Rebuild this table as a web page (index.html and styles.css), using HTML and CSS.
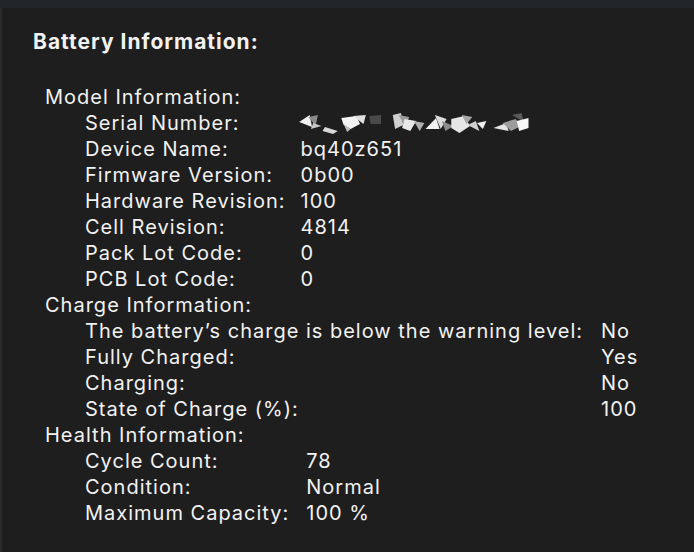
FILE: index.html
```html
<!DOCTYPE html>
<html>
<head>
<meta charset="utf-8">
<link rel="stylesheet" href="styles.css">
</head>
<body>
<div class="topbar"></div>
<main class="panel">
  <h1 class="title">Battery Information:</h1>
  <section class="group">
    <div class="group-head">Model Information:</div>
    <div class="grid model">
      <div class="k">Serial Number:</div>
      <div class="v">
        <svg class="scramble" width="234" height="22" viewBox="0 0 200 22" preserveAspectRatio="none">
          <polygon points="1,10 10,3 12,15" fill="#f0f0f0"/>
          <polygon points="9,5 17,3 15,14" fill="#8a8a8a"/>
          <polygon points="13,11 20,14 11,17" fill="#c8c8c8"/>
          <polygon points="23,15 34,19 30,22 21,19" fill="#d8d8d8"/>
          <polygon points="37,6 50,4 53,12 45,17 39,13" fill="#f4f4f4"/>
          <polygon points="47,4 58,3 56,12" fill="#e0e0e0"/>
          <polygon points="39,12 45,17 42,20" fill="#bdbdbd"/>
          <polygon points="61,4 71,3 71,12 62,12" fill="#4a4a4a"/>
          <polygon points="81,3 88,1 90,13 83,17" fill="#d0d0d0"/>
          <polygon points="86,3 95,5 92,15" fill="#9a9a9a"/>
          <polygon points="91,7 101,9 96,19 89,16" fill="#e8e8e8"/>
          <polygon points="99,9 108,11 104,19" fill="#b0b0b0"/>
          <polygon points="109,17 118,6 121,17" fill="#f2f2f2"/>
          <polygon points="117,3 127,7 122,17" fill="#dcdcdc"/>
          <polygon points="123,9 133,14 126,19" fill="#8c8c8c"/>
          <polygon points="131,7 142,4 147,14 138,21 131,16" fill="#e6e6e6"/>
          <polygon points="140,3 149,5 144,12" fill="#a8a8a8"/>
          <polygon points="145,13 152,9 155,19" fill="#cfcfcf"/>
          <polygon points="153,11 161,9 158,17" fill="#f0f0f0"/>
          <polygon points="167,16 178,11 180,19" fill="#e4e4e4"/>
          <polygon points="175,11 186,7 191,14 182,19" fill="#9c9c9c"/>
          <polygon points="183,3 191,1 193,10" fill="#5a5a5a"/>
          <polygon points="187,9 197,6 197,16 189,19" fill="#f6f6f6"/>
        </svg>
      </div>
      <div class="k">Device Name:</div><div class="v">bq40z651</div>
      <div class="k">Firmware Version:</div><div class="v">0b00</div>
      <div class="k">Hardware Revision:</div><div class="v">100</div>
      <div class="k">Cell Revision:</div><div class="v">4814</div>
      <div class="k">Pack Lot Code:</div><div class="v">0</div>
      <div class="k">PCB Lot Code:</div><div class="v">0</div>
    </div>
  </section>
  <section class="group">
    <div class="group-head">Charge Information:</div>
    <div class="grid charge">
      <div class="k">The battery’s charge is below the warning level:</div><div class="v">No</div>
      <div class="k">Fully Charged:</div><div class="v">Yes</div>
      <div class="k">Charging:</div><div class="v">No</div>
      <div class="k">State of Charge (%):</div><div class="v">100</div>
    </div>
  </section>
  <section class="group">
    <div class="group-head">Health Information:</div>
    <div class="grid health">
      <div class="k">Cycle Count:</div><div class="v">78</div>
      <div class="k">Condition:</div><div class="v">Normal</div>
      <div class="k">Maximum Capacity:</div><div class="v">100 %</div>
    </div>
  </section>
</main>
</body>
</html>
```

FILE: styles.css
```css
html, body {
  margin: 0;
  padding: 0;
  height: 100%;
}
body {
  background: #1e1e1e;
  color: #f2f2f2;
  font-family: Inter, "Liberation Sans", sans-serif;
  font-size: 20px;
  line-height: 26px;
  letter-spacing: 1px;
  overflow: hidden;
  display: flex;
  flex-direction: column;
}
.topbar {
  height: 8px;
  flex: none;
  background: #22262b;
}
.panel {
  flex: 1;
  border-left: 2px solid #2a2a2a;
  padding: 21px 0 0 31px;
}
.title {
  margin: 0 0 29px 0;
  font-size: 21px;
  font-weight: 700;
  line-height: 26px;
  letter-spacing: 1px;
}
.group {
  padding-left: 12px;
}
.grid {
  display: grid;
  grid-template-columns: max-content max-content;
  column-gap: 15px;
  padding-left: 40px;
}
.charge {
  column-gap: 18px;
}
.health {
  column-gap: 17px;
}
.v {
  display: flex;
  align-items: center;
}
.scramble {
  display: block;
  margin-left: -3px;
}
```
